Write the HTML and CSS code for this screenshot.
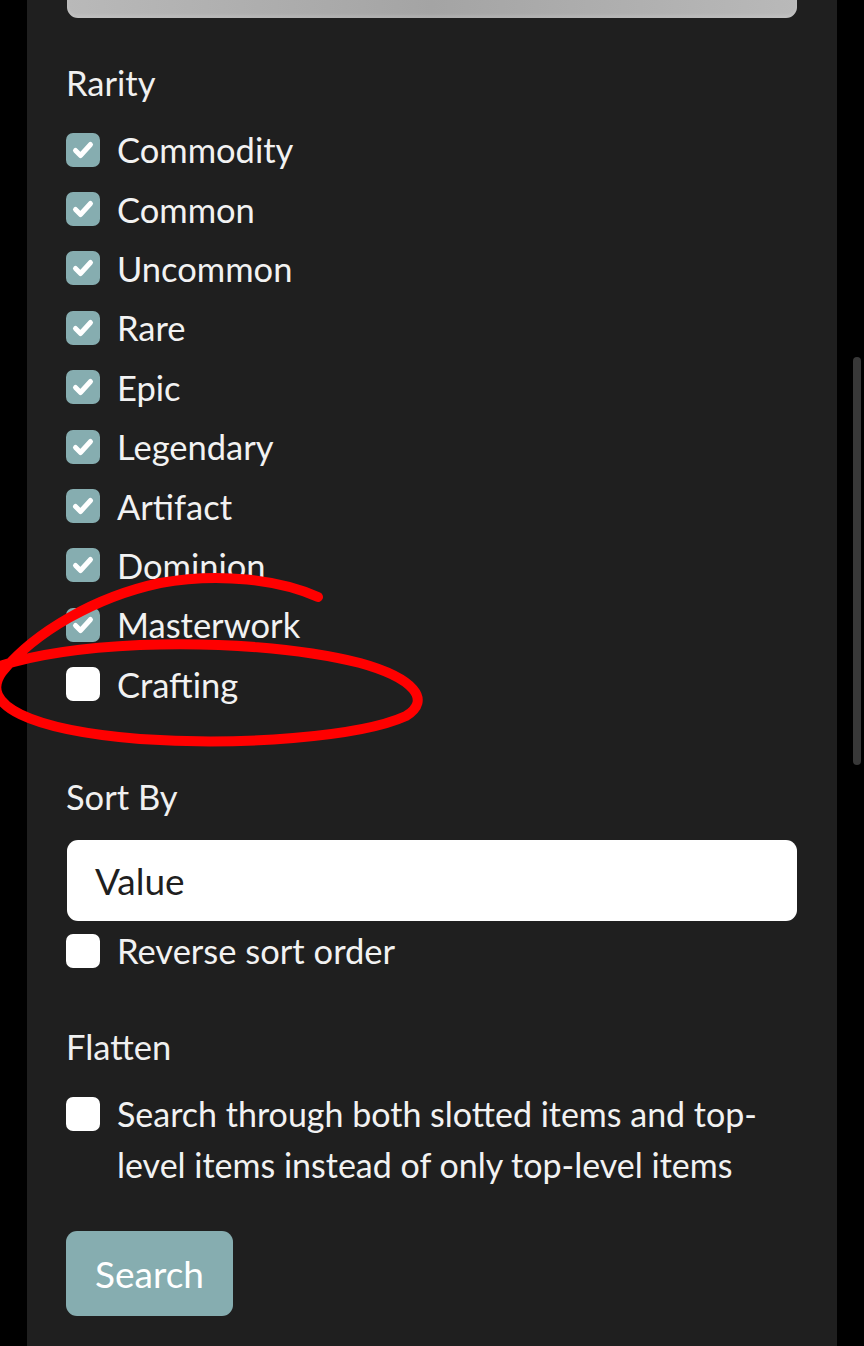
FILE: index.html
```html
<!DOCTYPE html>
<html lang="en">
<head>
<meta charset="utf-8">
<title>Search filters</title>
<link rel="stylesheet" href="styles.css">
</head>
<body>
<div class="page">
  <div class="panel">
    <div class="top-field"></div>

    <div class="heading rarity-heading">Rarity</div>
    <div class="check-list">
      <label class="check-row"><span class="box checked"><svg viewBox="0 0 34 34"><path d="M9.5 17.5 L14.5 22.5 L24.5 11.5"/></svg></span><span class="lbl">Commodity</span></label>
      <label class="check-row"><span class="box checked"><svg viewBox="0 0 34 34"><path d="M9.5 17.5 L14.5 22.5 L24.5 11.5"/></svg></span><span class="lbl">Common</span></label>
      <label class="check-row"><span class="box checked"><svg viewBox="0 0 34 34"><path d="M9.5 17.5 L14.5 22.5 L24.5 11.5"/></svg></span><span class="lbl">Uncommon</span></label>
      <label class="check-row"><span class="box checked"><svg viewBox="0 0 34 34"><path d="M9.5 17.5 L14.5 22.5 L24.5 11.5"/></svg></span><span class="lbl">Rare</span></label>
      <label class="check-row"><span class="box checked"><svg viewBox="0 0 34 34"><path d="M9.5 17.5 L14.5 22.5 L24.5 11.5"/></svg></span><span class="lbl">Epic</span></label>
      <label class="check-row"><span class="box checked"><svg viewBox="0 0 34 34"><path d="M9.5 17.5 L14.5 22.5 L24.5 11.5"/></svg></span><span class="lbl">Legendary</span></label>
      <label class="check-row"><span class="box checked"><svg viewBox="0 0 34 34"><path d="M9.5 17.5 L14.5 22.5 L24.5 11.5"/></svg></span><span class="lbl">Artifact</span></label>
      <label class="check-row"><span class="box checked"><svg viewBox="0 0 34 34"><path d="M9.5 17.5 L14.5 22.5 L24.5 11.5"/></svg></span><span class="lbl">Dominion</span></label>
      <label class="check-row"><span class="box checked"><svg viewBox="0 0 34 34"><path d="M9.5 17.5 L14.5 22.5 L24.5 11.5"/></svg></span><span class="lbl">Masterwork</span></label>
      <label class="check-row"><span class="box"></span><span class="lbl">Crafting</span></label>
    </div>

    <div class="heading sort-heading">Sort By</div>
    <div class="select">Value</div>
    <label class="check-row"><span class="box"></span><span class="lbl">Reverse sort order</span></label>

    <div class="heading flatten-heading">Flatten</div>
    <label class="check-row multi"><span class="box"></span><span class="lbl">Search through both slotted items and top-level items instead of only top-level items</span></label>

    <button class="search-btn" type="button">Search</button>
  </div>

  <div class="scrollbar"></div>

  <svg class="annotation" width="864" height="1346" viewBox="0 0 864 1346">
    <path d="M318 597 C 280 580, 220 572, 160 583 C 95 597, 35 632, 2 672 C -22 705, 30 730, 140 739 C 240 746, 360 737, 406 716 C 432 700, 414 678, 360 663 C 300 648, 220 642, 140 645 C 75 648, 25 657, -6 668"/>
  </svg>
</div>
</body>
</html>
```

FILE: styles.css
```css
html, body {
  margin: 0;
  padding: 0;
  background: #000;
}

body {
  font-family: Lato, "Open Sans", sans-serif;
  color: #f2f2f2;
}

.page {
  position: relative;
  width: 864px;
  height: 1346px;
  overflow: hidden;
}

.panel {
  margin-left: 27px;
  width: 810px;
  height: 1346px;
  box-sizing: border-box;
  padding: 0 40px 0 39px;
  background: #1f1f1f;
  display: flex;
  flex-direction: column;
  align-items: flex-start;
}

.top-field {
  align-self: stretch;
  margin-left: 1px;
  height: 18px;
  border-radius: 0 0 11px 11px;
  background: linear-gradient(90deg, #b9b9b9 0%, #a4a4a4 50%, #b9b9b9 100%);
  box-shadow: inset 0 -3px 3px rgba(255, 255, 255, 0.12);
}

.heading {
  font-size: 34.5px;
  line-height: 40px;
  height: 40px;
  color: #f0f0f0;
}

.rarity-heading { margin-top: 45px; }
.sort-heading { margin-top: 63px; }
.flatten-heading { margin-top: 47px; }

.check-list {
  margin-top: 17px;
  display: flex;
  flex-direction: column;
}

.check-row {
  display: flex;
  align-items: center;
  gap: 17px;
  height: 59.4px;
  font-size: 34.5px;
  color: #f2f2f2;
}

.box {
  flex: 0 0 34px;
  width: 34px;
  height: 34px;
  border-radius: 7px;
  background: #fff;
  display: flex;
  align-items: center;
  justify-content: center;
}

.box.checked {
  background: #86adb0;
}

.box svg {
  width: 34px;
  height: 34px;
}

.box svg path {
  fill: none;
  stroke: #fff;
  stroke-width: 5;
  stroke-linecap: round;
  stroke-linejoin: round;
}

.select {
  margin-top: 23px;
  align-self: stretch;
  margin-left: 1px;
  height: 81px;
  box-sizing: border-box;
  padding-left: 28px;
  background: #fff;
  border-radius: 11px;
  color: #1f1f1f;
  font-size: 37px;
  display: flex;
  align-items: center;
}

.check-row.multi {
  margin-top: 21px;
  height: auto;
  align-items: flex-start;
  line-height: 51px;
  font-size: 34px;
}

.check-row.multi .box {
  margin-top: 8.5px;
}

.search-btn {
  margin-top: 41px;
  width: 167px;
  height: 85px;
  border: none;
  border-radius: 11px;
  background: #86adb0;
  color: #fff;
  font-family: Lato, "Open Sans", sans-serif;
  font-size: 37px;
  padding: 0;
}

.scrollbar {
  position: absolute;
  left: 853px;
  top: 357px;
  width: 8px;
  height: 408px;
  border-radius: 4px;
  background: #383838;
}

.annotation {
  position: absolute;
  left: 0;
  top: 0;
  pointer-events: none;
}

.annotation path {
  fill: none;
  stroke: #f00;
  stroke-width: 10;
  stroke-linecap: round;
  stroke-linejoin: round;
}
```
